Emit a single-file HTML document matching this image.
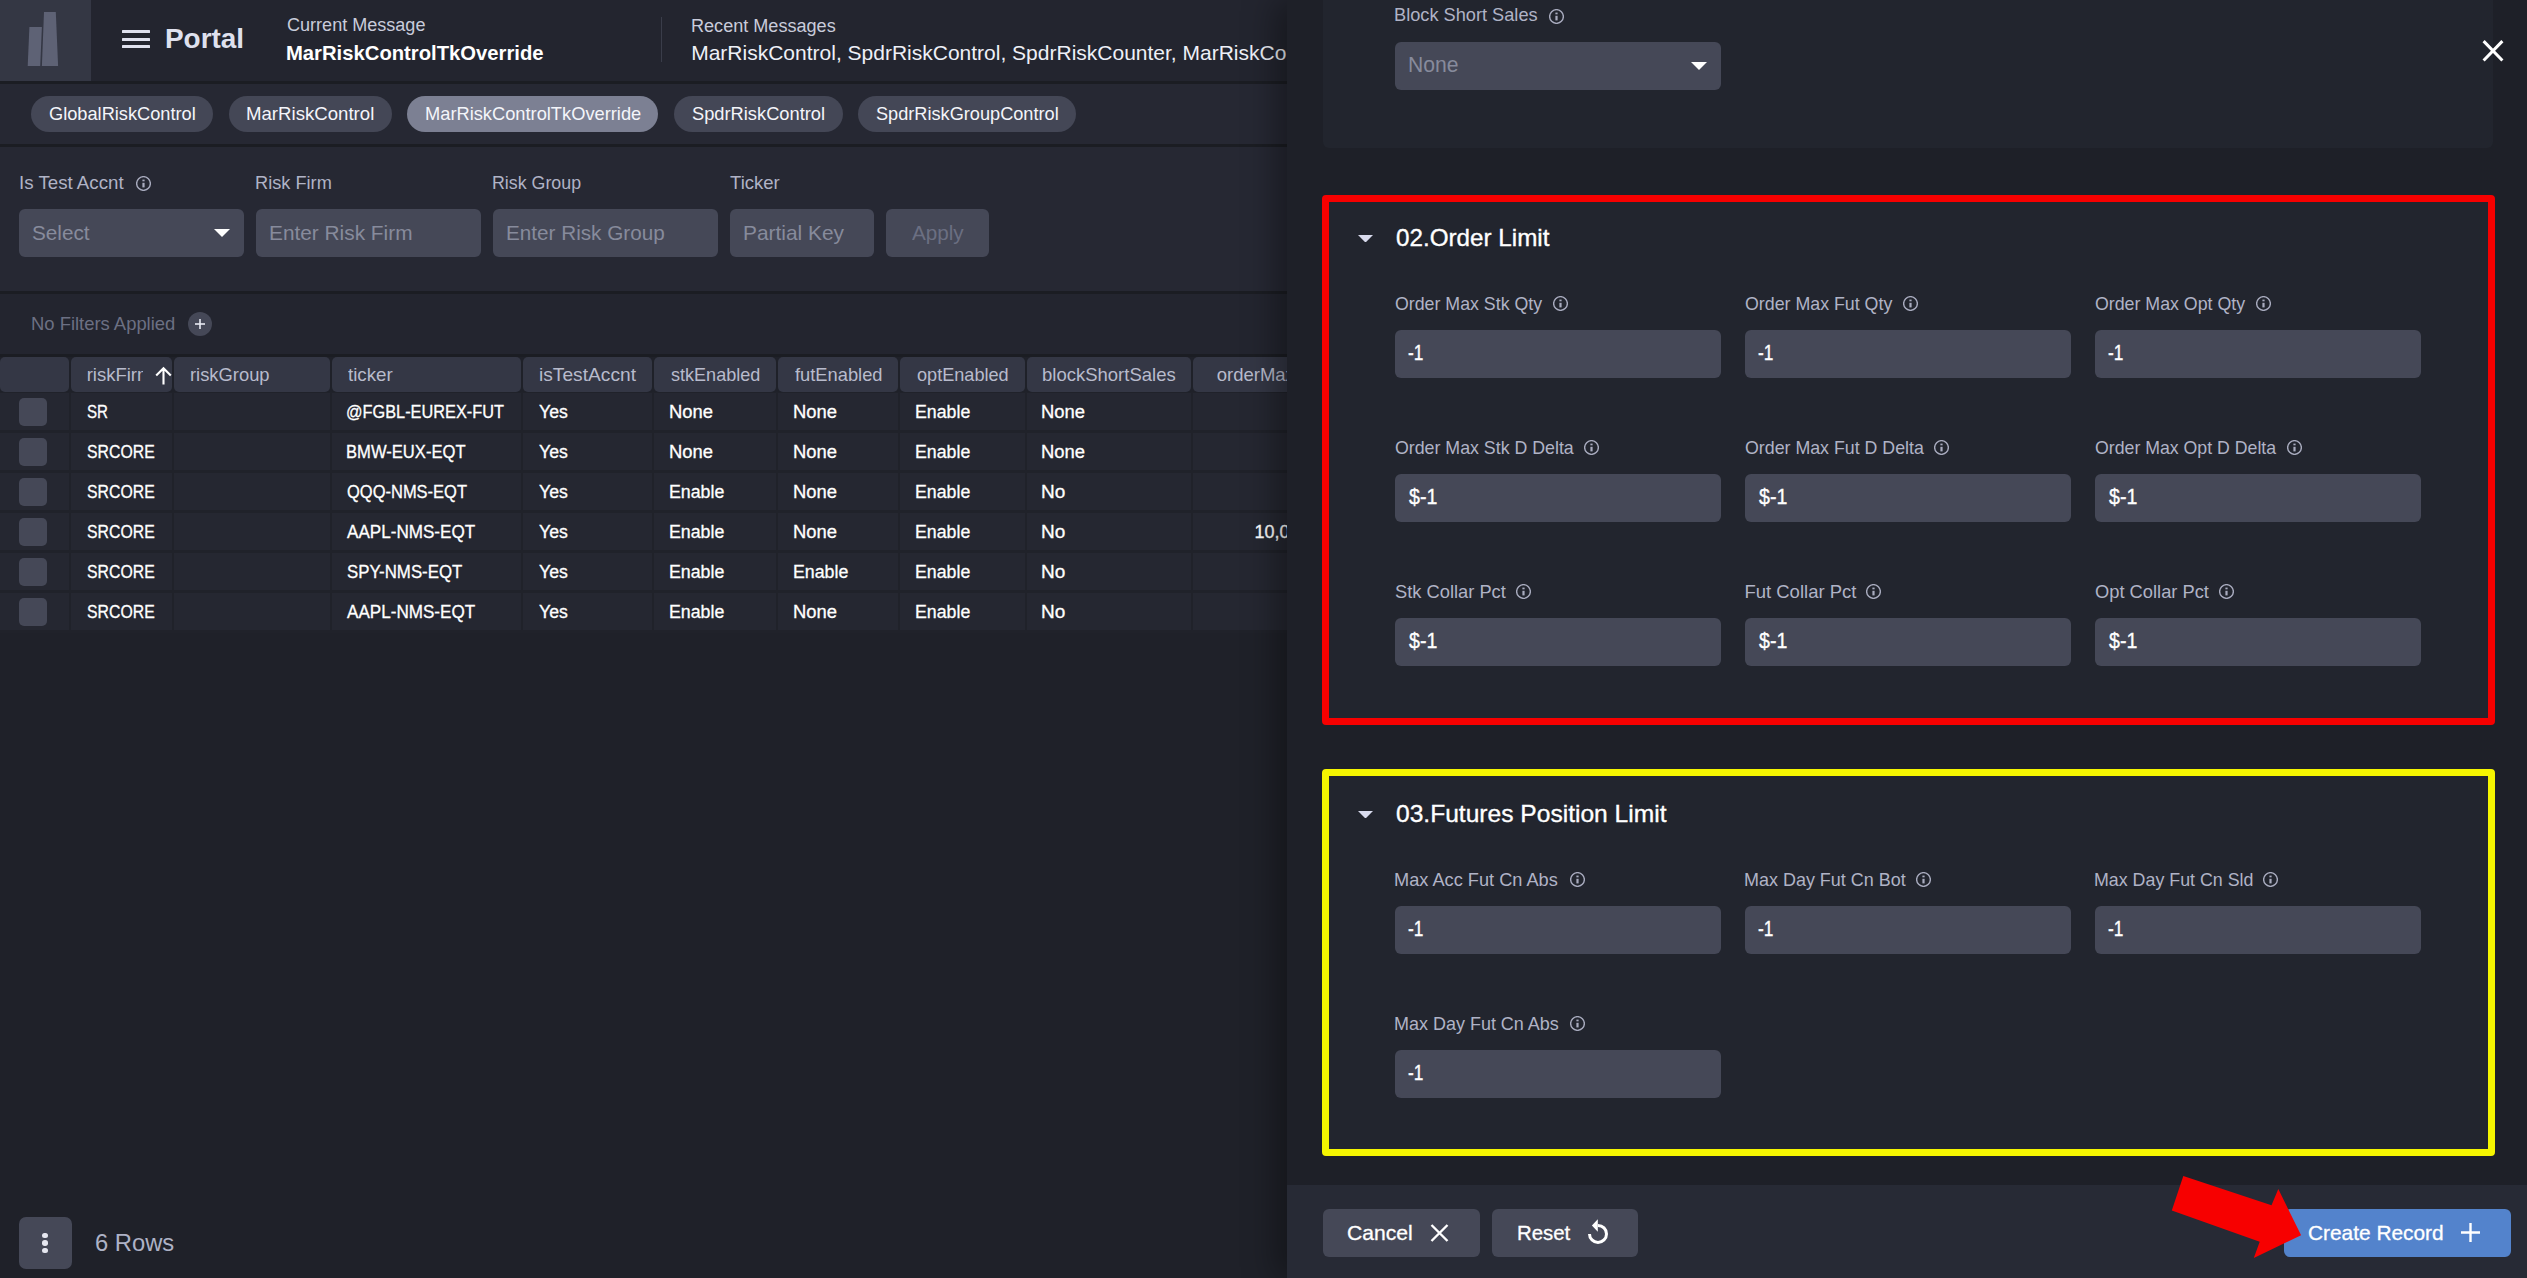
<!DOCTYPE html><html><head><meta charset="utf-8"><style>html,body{margin:0;padding:0;}body{width:2527px;height:1278px;overflow:hidden;position:relative;background:#1f2129;font-family:"Liberation Sans", sans-serif;}div{box-sizing:border-box}</style></head><body>
<div style="position:absolute;left:0;top:0;width:1287px;height:1278px;overflow:hidden;">
<div style="position:absolute;left:0px;top:0px;width:1287px;height:81px;background:#23252f;border-radius:0px;"></div>
<div style="position:absolute;left:0px;top:81px;width:1287px;height:3px;background:#1b1d23;border-radius:0px;"></div>
<div style="position:absolute;left:0px;top:84px;width:1287px;height:60px;background:#262833;border-radius:0px;"></div>
<div style="position:absolute;left:0px;top:144px;width:1287px;height:3px;background:#1b1d23;border-radius:0px;"></div>
<div style="position:absolute;left:0px;top:147px;width:1287px;height:144px;background:#262833;border-radius:0px;"></div>
<div style="position:absolute;left:0px;top:291px;width:1287px;height:3px;background:#1b1d23;border-radius:0px;"></div>
<div style="position:absolute;left:0px;top:294px;width:1287px;height:60px;background:#23252f;border-radius:0px;"></div>
<div style="position:absolute;left:0px;top:354px;width:1287px;height:3px;background:#1b1d23;border-radius:0px;"></div>
<div style="position:absolute;left:0px;top:0px;width:91px;height:81px;background:#343744;border-radius:0px;"></div>
<svg style="position:absolute;left:0;top:0" width="91" height="81" viewBox="0 0 91 81"><polygon points="29.4,27 41.9,27 40.2,66 27.7,66" fill="#5e6275"/><polygon points="44,12 55.8,12 58.1,66 41.9,66" fill="#5e6275"/></svg>
<div style="position:absolute;left:122px;top:30px;width:28px;height:3.2px;background:#dfe1ee;border-radius:0.5px;"></div>
<div style="position:absolute;left:122px;top:37.5px;width:28px;height:3.2px;background:#dfe1ee;border-radius:0.5px;"></div>
<div style="position:absolute;left:122px;top:45px;width:28px;height:3.2px;background:#dfe1ee;border-radius:0.5px;"></div>
<div style="position:absolute;left:164.97px;top:25.94px;font-size:27px;line-height:27px;color:#dfe1ee;font-weight:700;white-space:nowrap;transform:scaleX(1.0336);transform-origin:0 0;">Portal</div>
<div style="position:absolute;left:286.60px;top:15.86px;font-size:18px;line-height:18px;color:#c9ccdb;font-weight:400;white-space:nowrap;transform:scaleX(1.0026);transform-origin:0 0;">Current Message</div>
<div style="position:absolute;left:285.64px;top:42.22px;font-size:21px;line-height:21px;color:#ffffff;font-weight:700;white-space:nowrap;transform:scaleX(0.9640);transform-origin:0 0;">MarRiskControlTkOverride</div>
<div style="position:absolute;left:661px;top:17px;width:1px;height:45px;background:#3a3d4a;border-radius:0px;"></div>
<div style="position:absolute;left:691.20px;top:16.66px;font-size:18px;line-height:18px;color:#c9ccdb;font-weight:400;white-space:nowrap;transform:scaleX(1.0044);transform-origin:0 0;">Recent Messages</div>
<div style="position:absolute;left:691.20px;top:42.22px;font-size:21px;line-height:21px;color:#eef0f7;font-weight:400;white-space:nowrap;">MarRiskControl, SpdrRiskControl, SpdrRiskCounter, MarRiskControlTkOverride</div>
<div style="position:absolute;left:31px;top:96px;width:182px;height:36px;background:#444756;border-radius:18px;"></div>
<div style="position:absolute;left:49.40px;top:103.92px;font-size:19px;line-height:19px;color:#f4f5fa;font-weight:400;white-space:nowrap;transform:scaleX(0.9586);transform-origin:0 0;">GlobalRiskControl</div>
<div style="position:absolute;left:229px;top:96px;width:163px;height:36px;background:#444756;border-radius:18px;"></div>
<div style="position:absolute;left:246.42px;top:103.92px;font-size:19px;line-height:19px;color:#f4f5fa;font-weight:400;white-space:nowrap;transform:scaleX(0.9799);transform-origin:0 0;">MarRiskControl</div>
<div style="position:absolute;left:407px;top:96px;width:251px;height:36px;background:#7c8093;border-radius:18px;"></div>
<div style="position:absolute;left:424.74px;top:103.92px;font-size:19px;line-height:19px;color:#f4f5fa;font-weight:400;white-space:nowrap;transform:scaleX(0.9615);transform-origin:0 0;">MarRiskControlTkOverride</div>
<div style="position:absolute;left:674px;top:96px;width:169px;height:36px;background:#444756;border-radius:18px;"></div>
<div style="position:absolute;left:692.20px;top:103.92px;font-size:19px;line-height:19px;color:#f4f5fa;font-weight:400;white-space:nowrap;transform:scaleX(0.9620);transform-origin:0 0;">SpdrRiskControl</div>
<div style="position:absolute;left:858px;top:96px;width:218px;height:36px;background:#444756;border-radius:18px;"></div>
<div style="position:absolute;left:875.80px;top:103.92px;font-size:19px;line-height:19px;color:#f4f5fa;font-weight:400;white-space:nowrap;transform:scaleX(0.9557);transform-origin:0 0;">SpdrRiskGroupControl</div>
<div style="position:absolute;left:18.59px;top:173.74px;font-size:18.5px;line-height:18.5px;color:#b0b3c6;font-weight:400;white-space:nowrap;transform:scaleX(1.0103);transform-origin:0 0;">Is Test Accnt</div>
<svg style="position:absolute;left:135.5px;top:175.5px" width="15" height="15" viewBox="0 0 15 15"><circle cx="7.5" cy="7.5" r="6.85" fill="none" stroke="#a9acbf" stroke-width="1.4"/><rect x="6.4" y="6.8" width="2.2" height="4.6" fill="#a9acbf"/><rect x="6.4" y="3.6" width="2.2" height="1.7" fill="#a9acbf"/></svg>
<div style="position:absolute;left:255.02px;top:173.74px;font-size:18.5px;line-height:18.5px;color:#b0b3c6;font-weight:400;white-space:nowrap;transform:scaleX(0.9833);transform-origin:0 0;">Risk Firm</div>
<div style="position:absolute;left:492.04px;top:173.74px;font-size:18.5px;line-height:18.5px;color:#b0b3c6;font-weight:400;white-space:nowrap;transform:scaleX(0.9623);transform-origin:0 0;">Risk Group</div>
<div style="position:absolute;left:730.10px;top:173.74px;font-size:18.5px;line-height:18.5px;color:#b0b3c6;font-weight:400;white-space:nowrap;">Ticker</div>
<div style="position:absolute;left:19px;top:209px;width:225px;height:48px;background:#454857;border-radius:6px;"></div>
<div style="position:absolute;left:32.30px;top:222.42px;font-size:21px;line-height:21px;color:#878b9c;font-weight:400;white-space:nowrap;transform:scaleX(0.9875);transform-origin:0 0;">Select</div>
<svg style="position:absolute;left:214px;top:229px" width="16" height="8" viewBox="0 0 16 8"><polygon points="0,0 16,0 8.0,8" fill="#ffffff"/></svg>
<div style="position:absolute;left:256px;top:209px;width:225px;height:48px;background:#454857;border-radius:6px;"></div>
<div style="position:absolute;left:268.51px;top:222.42px;font-size:21px;line-height:21px;color:#878b9c;font-weight:400;white-space:nowrap;transform:scaleX(0.9918);transform-origin:0 0;">Enter Risk Firm</div>
<div style="position:absolute;left:493px;top:209px;width:225px;height:48px;background:#454857;border-radius:6px;"></div>
<div style="position:absolute;left:505.51px;top:222.42px;font-size:21px;line-height:21px;color:#878b9c;font-weight:400;white-space:nowrap;transform:scaleX(0.9851);transform-origin:0 0;">Enter Risk Group</div>
<div style="position:absolute;left:730px;top:209px;width:144px;height:48px;background:#454857;border-radius:6px;"></div>
<div style="position:absolute;left:742.71px;top:222.42px;font-size:21px;line-height:21px;color:#878b9c;font-weight:400;white-space:nowrap;transform:scaleX(0.9946);transform-origin:0 0;">Partial Key</div>
<div style="position:absolute;left:886px;top:209px;width:103px;height:48px;background:#454857;border-radius:6px;"></div>
<div style="position:absolute;left:911.60px;top:222.42px;font-size:21px;line-height:21px;color:#6b6f82;font-weight:400;white-space:nowrap;transform:scaleX(0.9843);transform-origin:0 0;">Apply</div>
<div style="position:absolute;left:30.50px;top:315.34px;font-size:18.5px;line-height:18.5px;color:#6c7083;font-weight:400;white-space:nowrap;transform:scaleX(0.9951);transform-origin:0 0;">No Filters Applied</div>
<div style="position:absolute;left:188px;top:312px;width:24px;height:24px;background:#454857;border-radius:12px;"></div>
<svg style="position:absolute;left:188px;top:312px" width="24" height="24" viewBox="0 0 24 24"><rect x="7" y="11.2" width="10" height="1.6" fill="#e8e9f2"/><rect x="11.2" y="7" width="1.6" height="10" fill="#e8e9f2"/></svg>
<div style="position:absolute;left:0px;top:357px;width:69px;height:35px;background:#343745;border-radius:5px;"></div>
<div style="position:absolute;left:71px;top:357px;width:101px;height:35px;background:#343745;border-radius:5px;"></div>
<div style="position:absolute;left:174px;top:357px;width:156px;height:35px;background:#343745;border-radius:5px;"></div>
<div style="position:absolute;left:332px;top:357px;width:189px;height:35px;background:#343745;border-radius:5px;"></div>
<div style="position:absolute;left:523px;top:357px;width:129px;height:35px;background:#343745;border-radius:5px;"></div>
<div style="position:absolute;left:654px;top:357px;width:122px;height:35px;background:#343745;border-radius:5px;"></div>
<div style="position:absolute;left:778px;top:357px;width:120px;height:35px;background:#343745;border-radius:5px;"></div>
<div style="position:absolute;left:900px;top:357px;width:125px;height:35px;background:#343745;border-radius:5px;"></div>
<div style="position:absolute;left:1027px;top:357px;width:164px;height:35px;background:#343745;border-radius:5px;"></div>
<div style="position:absolute;left:1193px;top:357px;width:207px;height:35px;background:#343745;border-radius:5px;"></div>
<div style="position:absolute;left:71px;top:357px;width:71.5px;height:35px;overflow:hidden">
<div style="position:absolute;left:15.70px;top:8.64px;font-size:18.5px;line-height:18.5px;color:#b8bbcc;font-weight:400;white-space:nowrap;">riskFirm</div>
</div>
<div style="position:absolute;left:174px;top:357px;width:156px;height:35px;overflow:hidden">
<div style="position:absolute;left:15.91px;top:8.64px;font-size:18.5px;line-height:18.5px;color:#b8bbcc;font-weight:400;white-space:nowrap;transform:scaleX(0.9924);transform-origin:0 0;">riskGroup</div>
</div>
<div style="position:absolute;left:332px;top:357px;width:189px;height:35px;overflow:hidden">
<div style="position:absolute;left:16.40px;top:8.64px;font-size:18.5px;line-height:18.5px;color:#b8bbcc;font-weight:400;white-space:nowrap;transform:scaleX(1.0127);transform-origin:0 0;">ticker</div>
</div>
<div style="position:absolute;left:523px;top:357px;width:129px;height:35px;overflow:hidden">
<div style="position:absolute;left:15.56px;top:8.64px;font-size:18.5px;line-height:18.5px;color:#b8bbcc;font-weight:400;white-space:nowrap;transform:scaleX(1.0366);transform-origin:0 0;">isTestAccnt</div>
</div>
<div style="position:absolute;left:654px;top:357px;width:122px;height:35px;overflow:hidden">
<div style="position:absolute;left:16.60px;top:8.64px;font-size:18.5px;line-height:18.5px;color:#b8bbcc;font-weight:400;white-space:nowrap;transform:scaleX(0.9754);transform-origin:0 0;">stkEnabled</div>
</div>
<div style="position:absolute;left:778px;top:357px;width:120px;height:35px;overflow:hidden">
<div style="position:absolute;left:16.90px;top:8.64px;font-size:18.5px;line-height:18.5px;color:#b8bbcc;font-weight:400;white-space:nowrap;transform:scaleX(0.9890);transform-origin:0 0;">futEnabled</div>
</div>
<div style="position:absolute;left:900px;top:357px;width:125px;height:35px;overflow:hidden">
<div style="position:absolute;left:16.80px;top:8.64px;font-size:18.5px;line-height:18.5px;color:#b8bbcc;font-weight:400;white-space:nowrap;transform:scaleX(0.9794);transform-origin:0 0;">optEnabled</div>
</div>
<div style="position:absolute;left:1027px;top:357px;width:164px;height:35px;overflow:hidden">
<div style="position:absolute;left:15.00px;top:8.64px;font-size:18.5px;line-height:18.5px;color:#b8bbcc;font-weight:400;white-space:nowrap;">blockShortSales</div>
</div>
<div style="position:absolute;left:1193px;top:357px;width:207px;height:35px;overflow:hidden">
<div style="position:absolute;left:23.70px;top:8.64px;font-size:18.5px;line-height:18.5px;color:#b8bbcc;font-weight:400;white-space:nowrap;">orderMaxStkQty</div>
</div>
<svg style="position:absolute;left:154px;top:366px" width="19" height="19" viewBox="0 0 19 19"><path d="M9.5 18.5 V2.5 M2.2 9.6 L9.5 2.3 L16.8 9.6" fill="none" stroke="#ffffff" stroke-width="2.1"/></svg>
<div style="position:absolute;left:0px;top:392px;width:1287px;height:241px;background:#20222a;border-radius:0px;"></div>
<div style="position:absolute;left:0px;top:393px;width:69px;height:37px;background:#252731;border-radius:0px;"></div>
<div style="position:absolute;left:71px;top:393px;width:101px;height:37px;background:#252731;border-radius:0px;"></div>
<div style="position:absolute;left:174px;top:393px;width:156px;height:37px;background:#252731;border-radius:0px;"></div>
<div style="position:absolute;left:332px;top:393px;width:189px;height:37px;background:#252731;border-radius:0px;"></div>
<div style="position:absolute;left:523px;top:393px;width:129px;height:37px;background:#252731;border-radius:0px;"></div>
<div style="position:absolute;left:654px;top:393px;width:122px;height:37px;background:#252731;border-radius:0px;"></div>
<div style="position:absolute;left:778px;top:393px;width:120px;height:37px;background:#252731;border-radius:0px;"></div>
<div style="position:absolute;left:900px;top:393px;width:125px;height:37px;background:#252731;border-radius:0px;"></div>
<div style="position:absolute;left:1027px;top:393px;width:164px;height:37px;background:#252731;border-radius:0px;"></div>
<div style="position:absolute;left:1193px;top:393px;width:207px;height:37px;background:#252731;border-radius:0px;"></div>
<div style="position:absolute;left:19px;top:398px;width:28px;height:28px;background:#454857;border-radius:5px;"></div>
<div style="position:absolute;left:86.70px;top:402.56px;font-size:18px;line-height:18px;color:#ffffff;font-weight:400;white-space:nowrap;transform:scaleX(0.8398);transform-origin:0 0;-webkit-text-stroke:0.3px #ffffff;">SR</div>
<div style="position:absolute;left:346.49px;top:402.56px;font-size:18px;line-height:18px;color:#ffffff;font-weight:400;white-space:nowrap;transform:scaleX(0.9060);transform-origin:0 0;-webkit-text-stroke:0.3px #ffffff;">@FGBL-EUREX-FUT</div>
<div style="position:absolute;left:538.60px;top:402.56px;font-size:18px;line-height:18px;color:#ffffff;font-weight:400;white-space:nowrap;transform:scaleX(0.9808);transform-origin:0 0;-webkit-text-stroke:0.3px #ffffff;">Yes</div>
<div style="position:absolute;left:668.58px;top:402.56px;font-size:18px;line-height:18px;color:#ffffff;font-weight:400;white-space:nowrap;transform:scaleX(1.0233);transform-origin:0 0;-webkit-text-stroke:0.3px #ffffff;">None</div>
<div style="position:absolute;left:792.88px;top:402.56px;font-size:18px;line-height:18px;color:#ffffff;font-weight:400;white-space:nowrap;transform:scaleX(1.0233);transform-origin:0 0;-webkit-text-stroke:0.3px #ffffff;">None</div>
<div style="position:absolute;left:914.81px;top:402.56px;font-size:18px;line-height:18px;color:#ffffff;font-weight:400;white-space:nowrap;transform:scaleX(0.9866);transform-origin:0 0;-webkit-text-stroke:0.3px #ffffff;">Enable</div>
<div style="position:absolute;left:1040.98px;top:402.56px;font-size:18px;line-height:18px;color:#ffffff;font-weight:400;white-space:nowrap;transform:scaleX(1.0233);transform-origin:0 0;-webkit-text-stroke:0.3px #ffffff;">None</div>
<div style="position:absolute;left:0px;top:433px;width:69px;height:37px;background:#252731;border-radius:0px;"></div>
<div style="position:absolute;left:71px;top:433px;width:101px;height:37px;background:#252731;border-radius:0px;"></div>
<div style="position:absolute;left:174px;top:433px;width:156px;height:37px;background:#252731;border-radius:0px;"></div>
<div style="position:absolute;left:332px;top:433px;width:189px;height:37px;background:#252731;border-radius:0px;"></div>
<div style="position:absolute;left:523px;top:433px;width:129px;height:37px;background:#252731;border-radius:0px;"></div>
<div style="position:absolute;left:654px;top:433px;width:122px;height:37px;background:#252731;border-radius:0px;"></div>
<div style="position:absolute;left:778px;top:433px;width:120px;height:37px;background:#252731;border-radius:0px;"></div>
<div style="position:absolute;left:900px;top:433px;width:125px;height:37px;background:#252731;border-radius:0px;"></div>
<div style="position:absolute;left:1027px;top:433px;width:164px;height:37px;background:#252731;border-radius:0px;"></div>
<div style="position:absolute;left:1193px;top:433px;width:207px;height:37px;background:#252731;border-radius:0px;"></div>
<div style="position:absolute;left:19px;top:438px;width:28px;height:28px;background:#454857;border-radius:5px;"></div>
<div style="position:absolute;left:86.70px;top:442.56px;font-size:18px;line-height:18px;color:#ffffff;font-weight:400;white-space:nowrap;transform:scaleX(0.8792);transform-origin:0 0;-webkit-text-stroke:0.3px #ffffff;">SRCORE</div>
<div style="position:absolute;left:346.48px;top:442.56px;font-size:18px;line-height:18px;color:#ffffff;font-weight:400;white-space:nowrap;transform:scaleX(0.9217);transform-origin:0 0;-webkit-text-stroke:0.3px #ffffff;">BMW-EUX-EQT</div>
<div style="position:absolute;left:538.60px;top:442.56px;font-size:18px;line-height:18px;color:#ffffff;font-weight:400;white-space:nowrap;transform:scaleX(0.9808);transform-origin:0 0;-webkit-text-stroke:0.3px #ffffff;">Yes</div>
<div style="position:absolute;left:668.58px;top:442.56px;font-size:18px;line-height:18px;color:#ffffff;font-weight:400;white-space:nowrap;transform:scaleX(1.0233);transform-origin:0 0;-webkit-text-stroke:0.3px #ffffff;">None</div>
<div style="position:absolute;left:792.88px;top:442.56px;font-size:18px;line-height:18px;color:#ffffff;font-weight:400;white-space:nowrap;transform:scaleX(1.0233);transform-origin:0 0;-webkit-text-stroke:0.3px #ffffff;">None</div>
<div style="position:absolute;left:914.81px;top:442.56px;font-size:18px;line-height:18px;color:#ffffff;font-weight:400;white-space:nowrap;transform:scaleX(0.9866);transform-origin:0 0;-webkit-text-stroke:0.3px #ffffff;">Enable</div>
<div style="position:absolute;left:1040.98px;top:442.56px;font-size:18px;line-height:18px;color:#ffffff;font-weight:400;white-space:nowrap;transform:scaleX(1.0233);transform-origin:0 0;-webkit-text-stroke:0.3px #ffffff;">None</div>
<div style="position:absolute;left:0px;top:473px;width:69px;height:37px;background:#252731;border-radius:0px;"></div>
<div style="position:absolute;left:71px;top:473px;width:101px;height:37px;background:#252731;border-radius:0px;"></div>
<div style="position:absolute;left:174px;top:473px;width:156px;height:37px;background:#252731;border-radius:0px;"></div>
<div style="position:absolute;left:332px;top:473px;width:189px;height:37px;background:#252731;border-radius:0px;"></div>
<div style="position:absolute;left:523px;top:473px;width:129px;height:37px;background:#252731;border-radius:0px;"></div>
<div style="position:absolute;left:654px;top:473px;width:122px;height:37px;background:#252731;border-radius:0px;"></div>
<div style="position:absolute;left:778px;top:473px;width:120px;height:37px;background:#252731;border-radius:0px;"></div>
<div style="position:absolute;left:900px;top:473px;width:125px;height:37px;background:#252731;border-radius:0px;"></div>
<div style="position:absolute;left:1027px;top:473px;width:164px;height:37px;background:#252731;border-radius:0px;"></div>
<div style="position:absolute;left:1193px;top:473px;width:207px;height:37px;background:#252731;border-radius:0px;"></div>
<div style="position:absolute;left:19px;top:478px;width:28px;height:28px;background:#454857;border-radius:5px;"></div>
<div style="position:absolute;left:86.70px;top:482.56px;font-size:18px;line-height:18px;color:#ffffff;font-weight:400;white-space:nowrap;transform:scaleX(0.8792);transform-origin:0 0;-webkit-text-stroke:0.3px #ffffff;">SRCORE</div>
<div style="position:absolute;left:347.40px;top:482.56px;font-size:18px;line-height:18px;color:#ffffff;font-weight:400;white-space:nowrap;transform:scaleX(0.9161);transform-origin:0 0;-webkit-text-stroke:0.3px #ffffff;">QQQ-NMS-EQT</div>
<div style="position:absolute;left:538.60px;top:482.56px;font-size:18px;line-height:18px;color:#ffffff;font-weight:400;white-space:nowrap;transform:scaleX(0.9808);transform-origin:0 0;-webkit-text-stroke:0.3px #ffffff;">Yes</div>
<div style="position:absolute;left:668.61px;top:482.56px;font-size:18px;line-height:18px;color:#ffffff;font-weight:400;white-space:nowrap;transform:scaleX(0.9866);transform-origin:0 0;-webkit-text-stroke:0.3px #ffffff;">Enable</div>
<div style="position:absolute;left:792.88px;top:482.56px;font-size:18px;line-height:18px;color:#ffffff;font-weight:400;white-space:nowrap;transform:scaleX(1.0233);transform-origin:0 0;-webkit-text-stroke:0.3px #ffffff;">None</div>
<div style="position:absolute;left:914.81px;top:482.56px;font-size:18px;line-height:18px;color:#ffffff;font-weight:400;white-space:nowrap;transform:scaleX(0.9866);transform-origin:0 0;-webkit-text-stroke:0.3px #ffffff;">Enable</div>
<div style="position:absolute;left:1040.95px;top:482.56px;font-size:18px;line-height:18px;color:#ffffff;font-weight:400;white-space:nowrap;transform:scaleX(1.0546);transform-origin:0 0;-webkit-text-stroke:0.3px #ffffff;">No</div>
<div style="position:absolute;left:0px;top:513px;width:69px;height:37px;background:#252731;border-radius:0px;"></div>
<div style="position:absolute;left:71px;top:513px;width:101px;height:37px;background:#252731;border-radius:0px;"></div>
<div style="position:absolute;left:174px;top:513px;width:156px;height:37px;background:#252731;border-radius:0px;"></div>
<div style="position:absolute;left:332px;top:513px;width:189px;height:37px;background:#252731;border-radius:0px;"></div>
<div style="position:absolute;left:523px;top:513px;width:129px;height:37px;background:#252731;border-radius:0px;"></div>
<div style="position:absolute;left:654px;top:513px;width:122px;height:37px;background:#252731;border-radius:0px;"></div>
<div style="position:absolute;left:778px;top:513px;width:120px;height:37px;background:#252731;border-radius:0px;"></div>
<div style="position:absolute;left:900px;top:513px;width:125px;height:37px;background:#252731;border-radius:0px;"></div>
<div style="position:absolute;left:1027px;top:513px;width:164px;height:37px;background:#252731;border-radius:0px;"></div>
<div style="position:absolute;left:1193px;top:513px;width:207px;height:37px;background:#252731;border-radius:0px;"></div>
<div style="position:absolute;left:19px;top:518px;width:28px;height:28px;background:#454857;border-radius:5px;"></div>
<div style="position:absolute;left:86.70px;top:522.56px;font-size:18px;line-height:18px;color:#ffffff;font-weight:400;white-space:nowrap;transform:scaleX(0.8792);transform-origin:0 0;-webkit-text-stroke:0.3px #ffffff;">SRCORE</div>
<div style="position:absolute;left:347.40px;top:522.56px;font-size:18px;line-height:18px;color:#ffffff;font-weight:400;white-space:nowrap;transform:scaleX(0.9495);transform-origin:0 0;-webkit-text-stroke:0.3px #ffffff;">AAPL-NMS-EQT</div>
<div style="position:absolute;left:538.60px;top:522.56px;font-size:18px;line-height:18px;color:#ffffff;font-weight:400;white-space:nowrap;transform:scaleX(0.9808);transform-origin:0 0;-webkit-text-stroke:0.3px #ffffff;">Yes</div>
<div style="position:absolute;left:668.61px;top:522.56px;font-size:18px;line-height:18px;color:#ffffff;font-weight:400;white-space:nowrap;transform:scaleX(0.9866);transform-origin:0 0;-webkit-text-stroke:0.3px #ffffff;">Enable</div>
<div style="position:absolute;left:792.88px;top:522.56px;font-size:18px;line-height:18px;color:#ffffff;font-weight:400;white-space:nowrap;transform:scaleX(1.0233);transform-origin:0 0;-webkit-text-stroke:0.3px #ffffff;">None</div>
<div style="position:absolute;left:914.81px;top:522.56px;font-size:18px;line-height:18px;color:#ffffff;font-weight:400;white-space:nowrap;transform:scaleX(0.9866);transform-origin:0 0;-webkit-text-stroke:0.3px #ffffff;">Enable</div>
<div style="position:absolute;left:1040.95px;top:522.56px;font-size:18px;line-height:18px;color:#ffffff;font-weight:400;white-space:nowrap;transform:scaleX(1.0546);transform-origin:0 0;-webkit-text-stroke:0.3px #ffffff;">No</div>
<div style="position:absolute;left:1254.40px;top:522.56px;font-size:18px;line-height:18px;color:#ffffff;font-weight:400;white-space:nowrap;-webkit-text-stroke:0.3px #ffffff;">10,000</div>
<div style="position:absolute;left:0px;top:553px;width:69px;height:37px;background:#252731;border-radius:0px;"></div>
<div style="position:absolute;left:71px;top:553px;width:101px;height:37px;background:#252731;border-radius:0px;"></div>
<div style="position:absolute;left:174px;top:553px;width:156px;height:37px;background:#252731;border-radius:0px;"></div>
<div style="position:absolute;left:332px;top:553px;width:189px;height:37px;background:#252731;border-radius:0px;"></div>
<div style="position:absolute;left:523px;top:553px;width:129px;height:37px;background:#252731;border-radius:0px;"></div>
<div style="position:absolute;left:654px;top:553px;width:122px;height:37px;background:#252731;border-radius:0px;"></div>
<div style="position:absolute;left:778px;top:553px;width:120px;height:37px;background:#252731;border-radius:0px;"></div>
<div style="position:absolute;left:900px;top:553px;width:125px;height:37px;background:#252731;border-radius:0px;"></div>
<div style="position:absolute;left:1027px;top:553px;width:164px;height:37px;background:#252731;border-radius:0px;"></div>
<div style="position:absolute;left:1193px;top:553px;width:207px;height:37px;background:#252731;border-radius:0px;"></div>
<div style="position:absolute;left:19px;top:558px;width:28px;height:28px;background:#454857;border-radius:5px;"></div>
<div style="position:absolute;left:86.70px;top:562.56px;font-size:18px;line-height:18px;color:#ffffff;font-weight:400;white-space:nowrap;transform:scaleX(0.8792);transform-origin:0 0;-webkit-text-stroke:0.3px #ffffff;">SRCORE</div>
<div style="position:absolute;left:347.40px;top:562.56px;font-size:18px;line-height:18px;color:#ffffff;font-weight:400;white-space:nowrap;transform:scaleX(0.9347);transform-origin:0 0;-webkit-text-stroke:0.3px #ffffff;">SPY-NMS-EQT</div>
<div style="position:absolute;left:538.60px;top:562.56px;font-size:18px;line-height:18px;color:#ffffff;font-weight:400;white-space:nowrap;transform:scaleX(0.9808);transform-origin:0 0;-webkit-text-stroke:0.3px #ffffff;">Yes</div>
<div style="position:absolute;left:668.61px;top:562.56px;font-size:18px;line-height:18px;color:#ffffff;font-weight:400;white-space:nowrap;transform:scaleX(0.9866);transform-origin:0 0;-webkit-text-stroke:0.3px #ffffff;">Enable</div>
<div style="position:absolute;left:792.91px;top:562.56px;font-size:18px;line-height:18px;color:#ffffff;font-weight:400;white-space:nowrap;transform:scaleX(0.9866);transform-origin:0 0;-webkit-text-stroke:0.3px #ffffff;">Enable</div>
<div style="position:absolute;left:914.81px;top:562.56px;font-size:18px;line-height:18px;color:#ffffff;font-weight:400;white-space:nowrap;transform:scaleX(0.9866);transform-origin:0 0;-webkit-text-stroke:0.3px #ffffff;">Enable</div>
<div style="position:absolute;left:1040.95px;top:562.56px;font-size:18px;line-height:18px;color:#ffffff;font-weight:400;white-space:nowrap;transform:scaleX(1.0546);transform-origin:0 0;-webkit-text-stroke:0.3px #ffffff;">No</div>
<div style="position:absolute;left:0px;top:593px;width:69px;height:37px;background:#252731;border-radius:0px;"></div>
<div style="position:absolute;left:71px;top:593px;width:101px;height:37px;background:#252731;border-radius:0px;"></div>
<div style="position:absolute;left:174px;top:593px;width:156px;height:37px;background:#252731;border-radius:0px;"></div>
<div style="position:absolute;left:332px;top:593px;width:189px;height:37px;background:#252731;border-radius:0px;"></div>
<div style="position:absolute;left:523px;top:593px;width:129px;height:37px;background:#252731;border-radius:0px;"></div>
<div style="position:absolute;left:654px;top:593px;width:122px;height:37px;background:#252731;border-radius:0px;"></div>
<div style="position:absolute;left:778px;top:593px;width:120px;height:37px;background:#252731;border-radius:0px;"></div>
<div style="position:absolute;left:900px;top:593px;width:125px;height:37px;background:#252731;border-radius:0px;"></div>
<div style="position:absolute;left:1027px;top:593px;width:164px;height:37px;background:#252731;border-radius:0px;"></div>
<div style="position:absolute;left:1193px;top:593px;width:207px;height:37px;background:#252731;border-radius:0px;"></div>
<div style="position:absolute;left:19px;top:598px;width:28px;height:28px;background:#454857;border-radius:5px;"></div>
<div style="position:absolute;left:86.70px;top:602.56px;font-size:18px;line-height:18px;color:#ffffff;font-weight:400;white-space:nowrap;transform:scaleX(0.8792);transform-origin:0 0;-webkit-text-stroke:0.3px #ffffff;">SRCORE</div>
<div style="position:absolute;left:347.40px;top:602.56px;font-size:18px;line-height:18px;color:#ffffff;font-weight:400;white-space:nowrap;transform:scaleX(0.9495);transform-origin:0 0;-webkit-text-stroke:0.3px #ffffff;">AAPL-NMS-EQT</div>
<div style="position:absolute;left:538.60px;top:602.56px;font-size:18px;line-height:18px;color:#ffffff;font-weight:400;white-space:nowrap;transform:scaleX(0.9808);transform-origin:0 0;-webkit-text-stroke:0.3px #ffffff;">Yes</div>
<div style="position:absolute;left:668.61px;top:602.56px;font-size:18px;line-height:18px;color:#ffffff;font-weight:400;white-space:nowrap;transform:scaleX(0.9866);transform-origin:0 0;-webkit-text-stroke:0.3px #ffffff;">Enable</div>
<div style="position:absolute;left:792.88px;top:602.56px;font-size:18px;line-height:18px;color:#ffffff;font-weight:400;white-space:nowrap;transform:scaleX(1.0233);transform-origin:0 0;-webkit-text-stroke:0.3px #ffffff;">None</div>
<div style="position:absolute;left:914.81px;top:602.56px;font-size:18px;line-height:18px;color:#ffffff;font-weight:400;white-space:nowrap;transform:scaleX(0.9866);transform-origin:0 0;-webkit-text-stroke:0.3px #ffffff;">Enable</div>
<div style="position:absolute;left:1040.95px;top:602.56px;font-size:18px;line-height:18px;color:#ffffff;font-weight:400;white-space:nowrap;transform:scaleX(1.0546);transform-origin:0 0;-webkit-text-stroke:0.3px #ffffff;">No</div>
<div style="position:absolute;left:19px;top:1217px;width:53px;height:52px;background:#454857;border-radius:7px;"></div>
<div style="position:absolute;left:42.2px;top:1232.8px;width:5.6px;height:5.6px;border-radius:50%;background:#e6e7f0"></div>
<div style="position:absolute;left:42.2px;top:1240.3px;width:5.6px;height:5.6px;border-radius:50%;background:#e6e7f0"></div>
<div style="position:absolute;left:42.2px;top:1247.9px;width:5.6px;height:5.6px;border-radius:50%;background:#e6e7f0"></div>
<div style="position:absolute;left:95.37px;top:1231.53px;font-size:23px;line-height:23px;color:#aeb2c6;font-weight:400;white-space:nowrap;transform:scaleX(1.0333);transform-origin:0 0;">6 Rows</div>
</div>
<div style="position:absolute;left:1287px;top:0;width:1240px;height:1278px;background:#1e2028;box-shadow:-12px 0 30px rgba(0,0,0,0.35);"></div>
<div style="position:absolute;left:1323px;top:-10px;width:1170px;height:158px;background:#22252e;border-radius:6px;"></div>
<div style="position:absolute;left:1394.42px;top:6.44px;font-size:18.5px;line-height:18.5px;color:#b0b3c6;font-weight:400;white-space:nowrap;transform:scaleX(0.9837);transform-origin:0 0;">Block Short Sales</div>
<svg style="position:absolute;left:1548.6px;top:8.6px" width="15" height="15" viewBox="0 0 15 15"><circle cx="7.5" cy="7.5" r="6.85" fill="none" stroke="#a9acbf" stroke-width="1.4"/><rect x="6.4" y="6.8" width="2.2" height="4.6" fill="#a9acbf"/><rect x="6.4" y="3.6" width="2.2" height="1.7" fill="#a9acbf"/></svg>
<div style="position:absolute;left:1395px;top:42px;width:326px;height:48px;background:#454857;border-radius:6px;"></div>
<div style="position:absolute;left:1408.21px;top:54.97px;font-size:21.3px;line-height:21.3px;color:#878b9c;font-weight:400;white-space:nowrap;transform:scaleX(0.9925);transform-origin:0 0;">None</div>
<svg style="position:absolute;left:1691px;top:62px" width="16" height="8" viewBox="0 0 16 8"><polygon points="0,0 16,0 8.0,8" fill="#ffffff"/></svg>
<svg style="position:absolute;left:2480px;top:39px" width="25" height="25" viewBox="0 0 25 25"><path d="M3.6 2.1 L22.4 21.5 M22.4 2.1 L3.6 21.5" stroke="#ffffff" stroke-width="3" fill="none"/></svg>
<div style="position:absolute;left:1322px;top:195px;width:1173px;height:530px;background:#22252e;border-radius:4px;border:7px solid #f70000;"></div>
<svg style="position:absolute;left:1357.5px;top:234.7px" width="15" height="7.6" viewBox="0 0 15 7.6"><polygon points="0,0 15,0 7.5,7.6" fill="#d9dbee"/></svg>
<div style="position:absolute;left:1395.60px;top:225.56px;font-size:24.5px;line-height:24.5px;color:#ffffff;font-weight:400;white-space:nowrap;transform:scaleX(0.9883);transform-origin:0 0;-webkit-text-stroke:0.35px #ffffff;">02.Order Limit</div>
<div style="position:absolute;left:1395.40px;top:295.24px;font-size:18.5px;line-height:18.5px;color:#b0b3c6;font-weight:400;white-space:nowrap;transform:scaleX(0.9603);transform-origin:0 0;">Order Max Stk Qty</div>
<svg style="position:absolute;left:1552.7px;top:296.4px" width="15" height="15" viewBox="0 0 15 15"><circle cx="7.5" cy="7.5" r="6.85" fill="none" stroke="#a9acbf" stroke-width="1.4"/><rect x="6.4" y="6.8" width="2.2" height="4.6" fill="#a9acbf"/><rect x="6.4" y="3.6" width="2.2" height="1.7" fill="#a9acbf"/></svg>
<div style="position:absolute;left:1395px;top:330px;width:326px;height:48px;background:#454857;border-radius:6px;"></div>
<div style="position:absolute;left:1407.80px;top:342.90px;font-size:21.5px;line-height:21.5px;color:#ffffff;font-weight:400;white-space:nowrap;transform:scaleX(0.8040);transform-origin:0 0;-webkit-text-stroke:0.35px #ffffff;">-1</div>
<div style="position:absolute;left:1745.40px;top:295.24px;font-size:18.5px;line-height:18.5px;color:#b0b3c6;font-weight:400;white-space:nowrap;transform:scaleX(0.9616);transform-origin:0 0;">Order Max Fut Qty</div>
<svg style="position:absolute;left:1902.9px;top:296.4px" width="15" height="15" viewBox="0 0 15 15"><circle cx="7.5" cy="7.5" r="6.85" fill="none" stroke="#a9acbf" stroke-width="1.4"/><rect x="6.4" y="6.8" width="2.2" height="4.6" fill="#a9acbf"/><rect x="6.4" y="3.6" width="2.2" height="1.7" fill="#a9acbf"/></svg>
<div style="position:absolute;left:1745px;top:330px;width:326px;height:48px;background:#454857;border-radius:6px;"></div>
<div style="position:absolute;left:1757.80px;top:342.90px;font-size:21.5px;line-height:21.5px;color:#ffffff;font-weight:400;white-space:nowrap;transform:scaleX(0.8040);transform-origin:0 0;-webkit-text-stroke:0.35px #ffffff;">-1</div>
<div style="position:absolute;left:2095.40px;top:295.24px;font-size:18.5px;line-height:18.5px;color:#b0b3c6;font-weight:400;white-space:nowrap;transform:scaleX(0.9605);transform-origin:0 0;">Order Max Opt Qty</div>
<svg style="position:absolute;left:2255.7px;top:296.4px" width="15" height="15" viewBox="0 0 15 15"><circle cx="7.5" cy="7.5" r="6.85" fill="none" stroke="#a9acbf" stroke-width="1.4"/><rect x="6.4" y="6.8" width="2.2" height="4.6" fill="#a9acbf"/><rect x="6.4" y="3.6" width="2.2" height="1.7" fill="#a9acbf"/></svg>
<div style="position:absolute;left:2095px;top:330px;width:326px;height:48px;background:#454857;border-radius:6px;"></div>
<div style="position:absolute;left:2107.80px;top:342.90px;font-size:21.5px;line-height:21.5px;color:#ffffff;font-weight:400;white-space:nowrap;transform:scaleX(0.8040);transform-origin:0 0;-webkit-text-stroke:0.35px #ffffff;">-1</div>
<div style="position:absolute;left:1395.40px;top:439.24px;font-size:18.5px;line-height:18.5px;color:#b0b3c6;font-weight:400;white-space:nowrap;transform:scaleX(0.9605);transform-origin:0 0;">Order Max Stk D Delta</div>
<svg style="position:absolute;left:1584.3px;top:440.4px" width="15" height="15" viewBox="0 0 15 15"><circle cx="7.5" cy="7.5" r="6.85" fill="none" stroke="#a9acbf" stroke-width="1.4"/><rect x="6.4" y="6.8" width="2.2" height="4.6" fill="#a9acbf"/><rect x="6.4" y="3.6" width="2.2" height="1.7" fill="#a9acbf"/></svg>
<div style="position:absolute;left:1395px;top:474px;width:326px;height:48px;background:#454857;border-radius:6px;"></div>
<div style="position:absolute;left:1408.50px;top:486.90px;font-size:21.5px;line-height:21.5px;color:#ffffff;font-weight:400;white-space:nowrap;transform:scaleX(0.9098);transform-origin:0 0;-webkit-text-stroke:0.35px #ffffff;">$-1</div>
<div style="position:absolute;left:1745.40px;top:439.24px;font-size:18.5px;line-height:18.5px;color:#b0b3c6;font-weight:400;white-space:nowrap;transform:scaleX(0.9610);transform-origin:0 0;">Order Max Fut D Delta</div>
<svg style="position:absolute;left:1934.4px;top:440.4px" width="15" height="15" viewBox="0 0 15 15"><circle cx="7.5" cy="7.5" r="6.85" fill="none" stroke="#a9acbf" stroke-width="1.4"/><rect x="6.4" y="6.8" width="2.2" height="4.6" fill="#a9acbf"/><rect x="6.4" y="3.6" width="2.2" height="1.7" fill="#a9acbf"/></svg>
<div style="position:absolute;left:1745px;top:474px;width:326px;height:48px;background:#454857;border-radius:6px;"></div>
<div style="position:absolute;left:1758.50px;top:486.90px;font-size:21.5px;line-height:21.5px;color:#ffffff;font-weight:400;white-space:nowrap;transform:scaleX(0.9098);transform-origin:0 0;-webkit-text-stroke:0.35px #ffffff;">$-1</div>
<div style="position:absolute;left:2095.40px;top:439.24px;font-size:18.5px;line-height:18.5px;color:#b0b3c6;font-weight:400;white-space:nowrap;transform:scaleX(0.9575);transform-origin:0 0;">Order Max Opt D Delta</div>
<svg style="position:absolute;left:2286.7px;top:440.4px" width="15" height="15" viewBox="0 0 15 15"><circle cx="7.5" cy="7.5" r="6.85" fill="none" stroke="#a9acbf" stroke-width="1.4"/><rect x="6.4" y="6.8" width="2.2" height="4.6" fill="#a9acbf"/><rect x="6.4" y="3.6" width="2.2" height="1.7" fill="#a9acbf"/></svg>
<div style="position:absolute;left:2095px;top:474px;width:326px;height:48px;background:#454857;border-radius:6px;"></div>
<div style="position:absolute;left:2108.50px;top:486.90px;font-size:21.5px;line-height:21.5px;color:#ffffff;font-weight:400;white-space:nowrap;transform:scaleX(0.9098);transform-origin:0 0;-webkit-text-stroke:0.35px #ffffff;">$-1</div>
<div style="position:absolute;left:1395.40px;top:583.24px;font-size:18.5px;line-height:18.5px;color:#b0b3c6;font-weight:400;white-space:nowrap;transform:scaleX(0.9891);transform-origin:0 0;">Stk Collar Pct</div>
<svg style="position:absolute;left:1515.6px;top:584.4px" width="15" height="15" viewBox="0 0 15 15"><circle cx="7.5" cy="7.5" r="6.85" fill="none" stroke="#a9acbf" stroke-width="1.4"/><rect x="6.4" y="6.8" width="2.2" height="4.6" fill="#a9acbf"/><rect x="6.4" y="3.6" width="2.2" height="1.7" fill="#a9acbf"/></svg>
<div style="position:absolute;left:1395px;top:618px;width:326px;height:48px;background:#454857;border-radius:6px;"></div>
<div style="position:absolute;left:1408.50px;top:630.90px;font-size:21.5px;line-height:21.5px;color:#ffffff;font-weight:400;white-space:nowrap;transform:scaleX(0.9098);transform-origin:0 0;-webkit-text-stroke:0.35px #ffffff;">$-1</div>
<div style="position:absolute;left:1744.40px;top:583.24px;font-size:18.5px;line-height:18.5px;color:#b0b3c6;font-weight:400;white-space:nowrap;">Fut Collar Pct</div>
<svg style="position:absolute;left:1865.7px;top:584.4px" width="15" height="15" viewBox="0 0 15 15"><circle cx="7.5" cy="7.5" r="6.85" fill="none" stroke="#a9acbf" stroke-width="1.4"/><rect x="6.4" y="6.8" width="2.2" height="4.6" fill="#a9acbf"/><rect x="6.4" y="3.6" width="2.2" height="1.7" fill="#a9acbf"/></svg>
<div style="position:absolute;left:1745px;top:618px;width:326px;height:48px;background:#454857;border-radius:6px;"></div>
<div style="position:absolute;left:1758.50px;top:630.90px;font-size:21.5px;line-height:21.5px;color:#ffffff;font-weight:400;white-space:nowrap;transform:scaleX(0.9098);transform-origin:0 0;-webkit-text-stroke:0.35px #ffffff;">$-1</div>
<div style="position:absolute;left:2095.40px;top:583.24px;font-size:18.5px;line-height:18.5px;color:#b0b3c6;font-weight:400;white-space:nowrap;transform:scaleX(0.9895);transform-origin:0 0;">Opt Collar Pct</div>
<svg style="position:absolute;left:2218.7px;top:584.4px" width="15" height="15" viewBox="0 0 15 15"><circle cx="7.5" cy="7.5" r="6.85" fill="none" stroke="#a9acbf" stroke-width="1.4"/><rect x="6.4" y="6.8" width="2.2" height="4.6" fill="#a9acbf"/><rect x="6.4" y="3.6" width="2.2" height="1.7" fill="#a9acbf"/></svg>
<div style="position:absolute;left:2095px;top:618px;width:326px;height:48px;background:#454857;border-radius:6px;"></div>
<div style="position:absolute;left:2108.50px;top:630.90px;font-size:21.5px;line-height:21.5px;color:#ffffff;font-weight:400;white-space:nowrap;transform:scaleX(0.9098);transform-origin:0 0;-webkit-text-stroke:0.35px #ffffff;">$-1</div>
<div style="position:absolute;left:1322px;top:769px;width:1173px;height:387px;background:#22252e;border-radius:4px;border:7px solid #f5f500;"></div>
<svg style="position:absolute;left:1357.5px;top:810.7px" width="15" height="7.6" viewBox="0 0 15 7.6"><polygon points="0,0 15,0 7.5,7.6" fill="#d9dbee"/></svg>
<div style="position:absolute;left:1395.60px;top:801.56px;font-size:24.5px;line-height:24.5px;color:#ffffff;font-weight:400;white-space:nowrap;transform:scaleX(1.0033);transform-origin:0 0;-webkit-text-stroke:0.35px #ffffff;">03.Futures Position Limit</div>
<div style="position:absolute;left:1394.42px;top:871.24px;font-size:18.5px;line-height:18.5px;color:#b0b3c6;font-weight:400;white-space:nowrap;transform:scaleX(0.9835);transform-origin:0 0;">Max Acc Fut Cn Abs</div>
<svg style="position:absolute;left:1569.5px;top:872.4px" width="15" height="15" viewBox="0 0 15 15"><circle cx="7.5" cy="7.5" r="6.85" fill="none" stroke="#a9acbf" stroke-width="1.4"/><rect x="6.4" y="6.8" width="2.2" height="4.6" fill="#a9acbf"/><rect x="6.4" y="3.6" width="2.2" height="1.7" fill="#a9acbf"/></svg>
<div style="position:absolute;left:1395px;top:906px;width:326px;height:48px;background:#454857;border-radius:6px;"></div>
<div style="position:absolute;left:1407.80px;top:918.90px;font-size:21.5px;line-height:21.5px;color:#ffffff;font-weight:400;white-space:nowrap;transform:scaleX(0.8040);transform-origin:0 0;-webkit-text-stroke:0.35px #ffffff;">-1</div>
<div style="position:absolute;left:1744.43px;top:871.24px;font-size:18.5px;line-height:18.5px;color:#b0b3c6;font-weight:400;white-space:nowrap;transform:scaleX(0.9709);transform-origin:0 0;">Max Day Fut Cn Bot</div>
<svg style="position:absolute;left:1915.5px;top:872.4px" width="15" height="15" viewBox="0 0 15 15"><circle cx="7.5" cy="7.5" r="6.85" fill="none" stroke="#a9acbf" stroke-width="1.4"/><rect x="6.4" y="6.8" width="2.2" height="4.6" fill="#a9acbf"/><rect x="6.4" y="3.6" width="2.2" height="1.7" fill="#a9acbf"/></svg>
<div style="position:absolute;left:1745px;top:906px;width:326px;height:48px;background:#454857;border-radius:6px;"></div>
<div style="position:absolute;left:1757.80px;top:918.90px;font-size:21.5px;line-height:21.5px;color:#ffffff;font-weight:400;white-space:nowrap;transform:scaleX(0.8040);transform-origin:0 0;-webkit-text-stroke:0.35px #ffffff;">-1</div>
<div style="position:absolute;left:2094.44px;top:871.24px;font-size:18.5px;line-height:18.5px;color:#b0b3c6;font-weight:400;white-space:nowrap;transform:scaleX(0.9633);transform-origin:0 0;">Max Day Fut Cn Sld</div>
<svg style="position:absolute;left:2263.1px;top:872.4px" width="15" height="15" viewBox="0 0 15 15"><circle cx="7.5" cy="7.5" r="6.85" fill="none" stroke="#a9acbf" stroke-width="1.4"/><rect x="6.4" y="6.8" width="2.2" height="4.6" fill="#a9acbf"/><rect x="6.4" y="3.6" width="2.2" height="1.7" fill="#a9acbf"/></svg>
<div style="position:absolute;left:2095px;top:906px;width:326px;height:48px;background:#454857;border-radius:6px;"></div>
<div style="position:absolute;left:2107.80px;top:918.90px;font-size:21.5px;line-height:21.5px;color:#ffffff;font-weight:400;white-space:nowrap;transform:scaleX(0.8040);transform-origin:0 0;-webkit-text-stroke:0.35px #ffffff;">-1</div>
<div style="position:absolute;left:1394.43px;top:1015.24px;font-size:18.5px;line-height:18.5px;color:#b0b3c6;font-weight:400;white-space:nowrap;transform:scaleX(0.9716);transform-origin:0 0;">Max Day Fut Cn Abs</div>
<svg style="position:absolute;left:1569.5px;top:1016.4px" width="15" height="15" viewBox="0 0 15 15"><circle cx="7.5" cy="7.5" r="6.85" fill="none" stroke="#a9acbf" stroke-width="1.4"/><rect x="6.4" y="6.8" width="2.2" height="4.6" fill="#a9acbf"/><rect x="6.4" y="3.6" width="2.2" height="1.7" fill="#a9acbf"/></svg>
<div style="position:absolute;left:1395px;top:1050px;width:326px;height:48px;background:#454857;border-radius:6px;"></div>
<div style="position:absolute;left:1407.80px;top:1062.90px;font-size:21.5px;line-height:21.5px;color:#ffffff;font-weight:400;white-space:nowrap;transform:scaleX(0.8040);transform-origin:0 0;-webkit-text-stroke:0.35px #ffffff;">-1</div>
<div style="position:absolute;left:1287px;top:1185px;width:1240px;height:93px;background:#272a35;border-radius:0px;"></div>
<div style="position:absolute;left:1323px;top:1209px;width:157px;height:48px;background:#454857;border-radius:6px;"></div>
<div style="position:absolute;left:1347.00px;top:1221.92px;font-size:21px;line-height:21px;color:#ffffff;font-weight:400;white-space:nowrap;transform:scaleX(1.0047);transform-origin:0 0;-webkit-text-stroke:0.3px #ffffff;">Cancel</div>
<svg style="position:absolute;left:1430px;top:1224px" width="19" height="18" viewBox="0 0 19 18"><path d="M1.5 1 L17.5 17 M17.5 1 L1.5 17" stroke="#ffffff" stroke-width="2.4" fill="none"/></svg>
<div style="position:absolute;left:1492px;top:1209px;width:146px;height:48px;background:#454857;border-radius:6px;"></div>
<div style="position:absolute;left:1516.83px;top:1221.92px;font-size:21px;line-height:21px;color:#ffffff;font-weight:400;white-space:nowrap;transform:scaleX(0.9699);transform-origin:0 0;-webkit-text-stroke:0.3px #ffffff;">Reset</div>
<svg style="position:absolute;left:1586px;top:1218px" width="24" height="28" viewBox="0 0 24 28"><path d="M3.5 15.9 A8.5 8.5 0 1 0 12 7.4" stroke="#ffffff" stroke-width="3" fill="none"/><polygon points="11.8,1.2 11.8,13.7 5.9,7.5" fill="#ffffff"/></svg>
<div style="position:absolute;left:2284px;top:1209px;width:227px;height:48px;background:#5383cc;border-radius:6px;"></div>
<div style="position:absolute;left:2308.01px;top:1221.92px;font-size:21px;line-height:21px;color:#ffffff;font-weight:400;white-space:nowrap;transform:scaleX(0.9935);transform-origin:0 0;-webkit-text-stroke:0.3px #ffffff;">Create Record</div>
<svg style="position:absolute;left:2460px;top:1222px" width="21" height="21" viewBox="0 0 21 21"><path d="M10.5 1 V20 M1 10.5 H20" stroke="#ffffff" stroke-width="2.4" fill="none"/></svg>
<svg style="position:absolute;left:0;top:0" width="2527" height="1278"><polygon points="2183.3,1176.1 2271.5,1205.3 2278.3,1189.1 2301.1,1235.2 2253.8,1258.1 2259.7,1241.7 2171.8,1210.4" fill="#f70000"/></svg>
</body></html>
